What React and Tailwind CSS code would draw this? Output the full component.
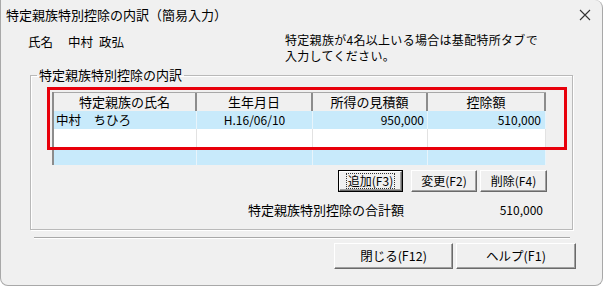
import React from "react";

const btn =
  "flex items-center justify-center bg-[#f0f0f0] border border-t-white border-l-white border-r-[#6a6a6a] border-b-[#6a6a6a] shadow-[inset_-1px_-1px_0_#a0a0a0]";

function App() {
  return (
    <div className="w-[605px] h-[287px] bg-white font-['Noto_Sans_CJK_JP',sans-serif] text-black">
      <div className="w-[603px] h-[286px] bg-[#f0f0f0] border-l border-r border-b border-[#a8a8a8] rounded-tr-[8px] rounded-b-[8px] flex flex-col">
        {/* Title bar */}
        <div className="h-[30px] flex items-center justify-between pl-[5px] pr-[11px]">
          <span className="text-[13px] leading-[16px]">特定親族特別控除の内訳（簡易入力）</span>
          <svg width="12" height="12" viewBox="0 0 12 12" className="text-[#333]">
            <path d="M1 1 L11 11 M11 1 L1 11" stroke="currentColor" strokeWidth="1.1" fill="none" />
          </svg>
        </div>

        {/* Info row */}
        <div className="flex items-start pt-[4px] pl-[27px] text-[12px] leading-[15px]">
          <div className="w-[257px] text-[12.5px]">
            <span>氏名</span>
            <span className="ml-[15px]">中村</span>
            <span className="ml-[6px]">政弘</span>
          </div>
          <div className="-mt-[2px] tracking-[0.3px] leading-[16px]">
            <div>特定親族が4名以上いる場合は基配特所タブで</div>
            <div>入力してください。</div>
          </div>
        </div>

        {/* Group box */}
        <fieldset className="ml-[29px] mt-[3px] w-[543px] border border-[#b9b9b9] shadow-[inset_1px_1px_0_#fff,1px_1px_0_#fff] pt-[9px] pb-[11px]">
          <legend className="ml-[6px] px-[2px] text-[13px] leading-[16px]">特定親族特別控除の内訳</legend>

          <div className="ml-[21px] w-[495px]">
            {/* Grid */}
            <div className="relative w-[494px] border-l-2 border-[#8c8c8c] text-[12.5px]">
              <div className="flex h-[19px] bg-[#f0f0f0] border-t border-[#a8a8a8] text-[13px] leading-[18px]">
                <div className="w-[143px] border-r-2 border-[#8c8c8c] text-center">特定親族の氏名</div>
                <div className="w-[116px] border-r-2 border-[#8c8c8c] text-center">生年月日</div>
                <div className="w-[115px] border-r-2 border-[#8c8c8c] text-center">所得の見積額</div>
                <div className="w-[118px] border-r-2 border-[#8c8c8c] text-center">控除額</div>
              </div>
              <div className="flex h-[18px] bg-[#c8eafb] leading-[18px]">
                <div className="w-[143px] border-r border-[#e8f4fb] pl-[2px]">中村　ちひろ</div>
                <div className="w-[116px] border-r border-[#e8f4fb] text-center text-[12px]">H.16/06/10</div>
                <div className="w-[115px] border-r border-[#e8f4fb] text-right pr-[3px] text-[12px]">950,000</div>
                <div className="w-[118px] border-r border-[#e8f4fb] text-right pr-[4px] text-[12px]">510,000</div>
              </div>
              <div className="flex h-[18px] bg-white">
                <div className="w-[143px] border-r border-[#e2e2e2]" />
                <div className="w-[116px] border-r border-[#e2e2e2]" />
                <div className="w-[115px] border-r border-[#e2e2e2]" />
                <div className="w-[118px] border-r border-[#e2e2e2]" />
              </div>
              <div className="flex h-[18px] bg-[#c8eafb]">
                <div className="w-[143px] border-r border-[#e8f4fb]" />
                <div className="w-[116px] border-r border-[#e8f4fb]" />
                <div className="w-[115px] border-r border-[#e8f4fb]" />
                <div className="w-[118px] border-r border-[#e8f4fb]" />
              </div>
              {/* highlight frame */}
              <div className="pointer-events-none absolute -left-[7px] -top-[5px] w-[520px] h-[63px] border-[3px] border-[#e8000b]" />
            </div>

            {/* Grid buttons */}
            <div className="mt-[5px] flex justify-end h-[22px] text-[12px]">
              <div className="w-[65px] border border-black flex">
                <div className={btn + " flex-1"}>
                  <span className="border border-dotted border-[#333] px-[1px] leading-[14px]">追加(F3)</span>
                </div>
              </div>
              <div className={btn + " w-[66px] ml-[8px]"}>変更(F2)</div>
              <div className={btn + " w-[67px] ml-[3px]"}>削除(F4)</div>
            </div>

            {/* Total */}
            <div className="mt-[10px] flex text-[13px] leading-[16px]">
              <span className="pl-[196px]">特定親族特別控除の合計額</span>
              <span className="ml-auto pr-[4px] text-[12px]">510,000</span>
            </div>
          </div>
        </fieldset>

        {/* Separator */}
        <div className="ml-[33px] mt-[7px] w-[536px] h-[2px] border-t border-[#a8a8a8] border-b border-b-white" />

        {/* Dialog buttons */}
        <div className="mt-[4px] flex pl-[333px] h-[26px] text-[12.5px]">
          <div className={btn + " w-[119px]"}>閉じる(F12)</div>
          <div className={btn + " w-[120px] ml-[3px]"}>ヘルプ(F1)</div>
        </div>
      </div>
    </div>
  );
}

export default App;
